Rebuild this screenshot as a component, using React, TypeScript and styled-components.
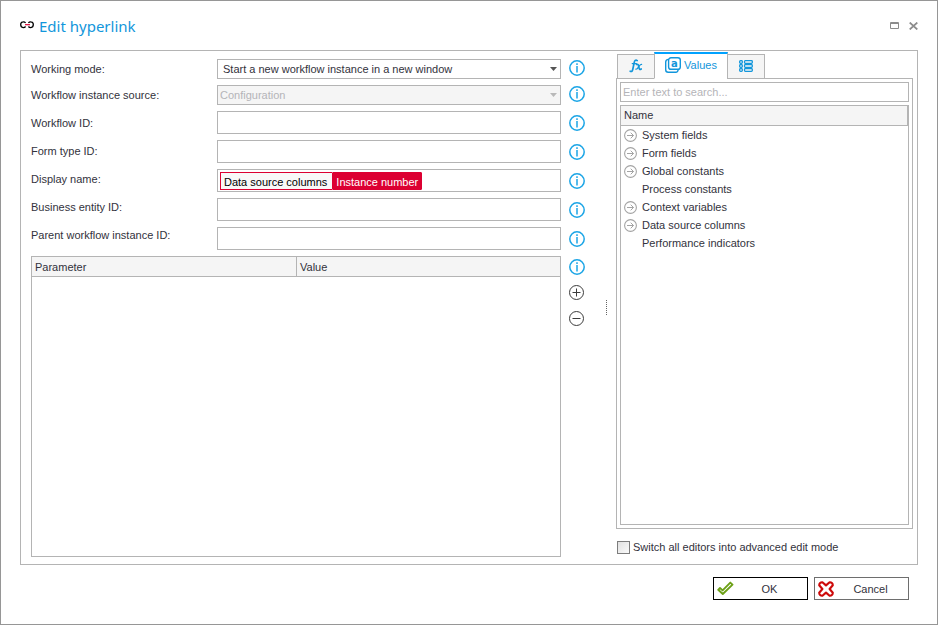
import React, { useState } from 'react';
import styled, { createGlobalStyle, css } from 'styled-components';

const line = '#b4b4b4';
const ink = '#32323c';
const blue = '#1296db';

const GlobalStyle = createGlobalStyle`
  * { box-sizing: border-box; }
  body { margin: 0; background: #fff; }
  body, button, input, select, table {
    font: 11px/16px "Liberation Sans", Tahoma, sans-serif;
    color: ${ink};
  }
`;

const Window = styled.main`
  display: flex;
  flex-direction: column;
  min-height: 100vh;
  padding: 0 19px;
  border: 1px solid #969696;
  background: #fff;
`;

const TitleBar = styled.header`
  display: flex;
  align-items: center;
  height: 49px;
`;

const Title = styled.h1`
  flex: 1;
  margin: 0 0 0 5px;
  font-family: "Noto Sans", "Open Sans", sans-serif;
  font-size: 15px;
  font-weight: 400;
  line-height: 24px;
  color: ${blue};
`;

const IconButton = styled.button`
  display: flex;
  align-items: center;
  justify-content: center;
  padding: 0;
  border: 0;
  background: none;
  cursor: pointer;
  svg { display: block; }
`;

const WindowControls = styled.div`
  display: flex;
  gap: 7px;
  ${IconButton} { width: 12px; height: 12px; justify-content: flex-end; }
`;

const Content = styled.div`
  flex: 1;
  display: grid;
  grid-template-columns: minmax(0, 1fr) 16px 15px 297px;
  column-gap: 8px;
  padding: 0 4px 0 10px;
  border: 1px solid ${line};
`;

const Form = styled.form`
  display: flex;
  flex-direction: column;
  gap: 6px;
  padding: 8px 0 7px;
`;

const Fields = styled.div`
  display: grid;
  grid-template-columns: 186px minmax(0, 1fr);
`;

const Labels = styled.div`
  display: grid;
  grid-template-rows: 23px 26px 29px repeat(4, 28px);
`;

const Label = styled.label`
  align-self: center;
  white-space: nowrap;
  &:first-child { align-self: start; line-height: 20px; }
`;

const Controls = styled.div`
  display: flex;
  flex-direction: column;
  gap: 6px;
`;

const field = css`
  width: 100%;
  border: 1px solid ${line};
  border-radius: 0;
  background: #fff;
  outline: none;
`;

const SelectBox = styled.div`
  display: grid;
  grid-template-columns: minmax(0, 1fr) 11px;
  align-items: center;
  > * { grid-row: 1; }
  svg { grid-column: 2; pointer-events: none; }
`;

const Select = styled.select`
  ${field}
  grid-column: 1 / -1;
  height: 20px;
  padding: 0 16px 0 5px;
  appearance: none;
  &:disabled { padding-left: 2px; background: #f5f5f5; color: #b4b4b8; opacity: 1; }
`;

const TextInput = styled.input`
  ${field}
  height: 23px;
  padding: 0 4px;
`;

const TagField = styled.div`
  ${field}
  display: flex;
  align-items: center;
  height: 23px;
  padding: 0 2px;
`;

const Tag = styled.span<{ $solid?: boolean }>`
  height: 18px;
  padding: ${p => (p.$solid ? '0 3px' : '0 5px 0 3px')};
  border: 1px solid #dc0032;
  border-right-width: ${p => (p.$solid ? 1 : 0)}px;
  border-radius: ${p => (p.$solid ? 1 : 0)}px;
  background: ${p => (p.$solid ? '#dc0032' : '#f8f8f8')};
  color: ${p => (p.$solid ? '#fff' : '#000')};
  line-height: 18px;
  white-space: nowrap;
`;

const ParameterBox = styled.div`
  flex: 1;
  border: 1px solid ${line};
`;

const ParameterTable = styled.table`
  width: 100%;
  table-layout: fixed;
  border-collapse: separate;
  border-spacing: 0;
  th {
    height: 20px;
    padding: 0 3px;
    border-bottom: 1px solid ${line};
    background: #f5f5f5;
    font-weight: 400;
    line-height: 18px;
    text-align: left;
  }
  th + th { border-left: 1px solid ${line}; }
`;

const Actions = styled.div`
  display: grid;
  grid-template-rows: 26px repeat(5, 29px) 28px repeat(3, 26px);
  align-content: start;
  align-items: start;
  padding-top: 9px;
`;

const Splitter = styled.div`
  align-self: center;
  justify-self: end;
  height: 15px;
  margin-right: 1px;
  border-right: 1px dotted #646464;
`;

const Side = styled.aside`
  display: flex;
  flex-direction: column;
  padding: 1px 0 8px;
`;

const Tabs = styled.div`
  display: flex;
  align-items: flex-end;
  height: 27px;
  margin-bottom: -1px;
  padding-left: 1px;
  z-index: 1;
`;

const Tab = styled.button<{ $active?: boolean }>`
  display: flex;
  align-items: center;
  justify-content: center;
  gap: 3px;
  width: ${p => (p.$active ? 74 : 38)}px;
  height: ${p => (p.$active ? 27 : 25)}px;
  padding: 0 0 2px;
  border: 1px solid ${line};
  background: #f5f5f5;
  color: ${blue};
  cursor: pointer;
  & + & { margin-left: -1px; }
  ${p => p.$active && css`
    border-top: 2px solid #00a2ff;
    border-bottom-color: #fff;
    background: #fff;
  `}
`;

const Panel = styled.section`
  flex: 1;
  display: flex;
  flex-direction: column;
  gap: 3px;
  padding: 3px;
  border: 1px solid ${line};
`;

const Search = styled.input`
  ${field}
  height: 20px;
  padding: 0 2px;
  &::placeholder { color: #b4b4b8; opacity: 1; }
`;

const Tree = styled.div`
  flex: 1;
  border: 1px solid ${line};
`;

const TreeHeader = styled.div`
  height: 20px;
  padding: 0 3px;
  border-right: 1px solid ${line};
  border-bottom: 1px solid ${line};
  background: #f5f5f5;
  line-height: 18px;
`;

const TreeList = styled.ul`
  margin: 0;
  padding: 0;
  list-style: none;
`;

const TreeRow = styled.li`
  display: grid;
  grid-template-columns: 13px 1fr;
  column-gap: 5px;
  align-items: center;
  height: 18px;
  padding-left: 3px;
  > span { grid-column: 2; }
`;

const CheckLabel = styled.label`
  display: flex;
  align-items: center;
  gap: 3px;
  padding: 9px 0 0 1px;
  line-height: 18px;
  input {
    width: 13px;
    height: 13px;
    margin: 0;
    appearance: none;
    border: 1px solid #7d7d7d;
    background: linear-gradient(135deg, #e1e1e1, #fafafa);
  }
  input:checked { background: ${blue}; }
`;

const Footer = styled.footer`
  display: flex;
  justify-content: flex-end;
  gap: 6px;
  padding: 12px 9px 24px;
`;

const DialogButton = styled.button<{ $primary?: boolean }>`
  display: grid;
  grid-template-columns: 18px 1fr;
  align-items: center;
  width: 95px;
  height: 23px;
  padding: 0 3px;
  border: 1px solid ${p => (p.$primary ? '#000' : '#6e6e6e')};
  background: #fff;
  text-align: center;
  cursor: pointer;
`;

const LinkIcon = () => (
  <svg width="14" height="10" viewBox="0 0 14 10" fill="none" aria-hidden="true">
    <path d="M5.6 1.9C4.9 1 4 .7 3.2.8 1.6.9.7 2 .7 3.6S1.6 6.5 3.2 6.6c.9 0 1.8-.3 2.4-1.1M8.4 1.9C9.1 1 10 .7 10.8.8c1.6.1 2.5 1.2 2.5 2.8s-.9 2.9-2.5 3c-.9 0-1.8-.3-2.4-1.1" stroke="#000" strokeWidth="1.3" />
    <path d="M5 3.7h5" stroke="#dc0032" strokeWidth="1.2" />
  </svg>
);

const InfoIcon = () => (
  <svg width="16" height="16" viewBox="0 0 16 16" fill="none" stroke="#1ba5e6">
    <circle cx="8" cy="8" r="7.2" strokeWidth="1.5" />
    <path d="M8 6v6.5" strokeWidth="1.5" />
    <path d="M8 3.3v1.6" strokeWidth="1.5" />
  </svg>
);

const CircleIcon = ({ plus }: { plus?: boolean }) => (
  <svg width="16" height="16" viewBox="0 0 16 16" fill="none" stroke="#3c3c3c">
    <circle cx="7.5" cy="7.5" r="7" />
    <path d={plus ? 'M3.5 7.5h8M7.5 3.5v8' : 'M3.5 7.5h8'} />
  </svg>
);

const ArrowDown = ({ muted }: { muted?: boolean }) => (
  <svg width="7" height="4" viewBox="0 0 7 4" aria-hidden="true">
    <path d="M0 0h7L3.5 4z" fill={muted ? '#b9b9b9' : '#555'} />
  </svg>
);

const ExpandIcon = () => (
  <svg width="13" height="13" viewBox="0 0 13 13" fill="none" stroke="#a4a4a4">
    <circle cx="6.5" cy="6.5" r="5.9" strokeWidth="1.1" />
    <path d="M3 6.5h6.5M6.7 3.7l2.8 2.8-2.8 2.8" />
  </svg>
);

const FormulaIcon = () => (
  <svg width="14" height="14" viewBox="0 0 14 14" fill="none" stroke={blue} strokeLinecap="round" aria-hidden="true">
    <path d="M8.2 1.6C6.6.4 5.6 1.6 5.2 3.6L3.8 10.2C3.4 12.2 2.6 13 1.2 12.2" strokeWidth="1.7" />
    <path d="M3.2 4.6h4.2" strokeWidth="1.2" />
    <path d="M7.6 5.4c1.6-.6 1.8.6 2.2 2.6s.8 3 2.4 2" strokeWidth="1.7" />
    <path d="M12.6 5.3c-1.4-.2-2.2 1.2-3 2.6s-1.4 2.6-2.8 2.3" strokeWidth="1.2" />
  </svg>
);

const ValuesIcon = () => (
  <svg width="16" height="16" viewBox="0 0 16 16" fill="none" stroke={blue} strokeWidth="1.4" aria-hidden="true">
    <rect x="3.6" y=".7" width="11.7" height="11.6" rx="2.4" />
    <path d="M3.6 2.4C1.6 2.6.7 3.4.7 5v7.8c0 1.7.9 2.5 2.5 2.5h7.6c1.4 0 2.2-.8 2.4-2.8" />
    <text x="9.4" y="9.6" textAnchor="middle" fontFamily="DejaVu Sans" fontSize="10" fontWeight="700" fill={blue} stroke="none">a</text>
  </svg>
);

const ListIcon = () => (
  <svg width="14" height="12" viewBox="0 0 14 12" fill="none" stroke={blue} strokeWidth="1.3" aria-hidden="true">
    {[0.7, 4.7, 8.7].map(y => (
      <g key={y}>
        <rect x=".7" y={y} width="2.6" height="2.6" rx=".8" />
        <rect x="5.5" y={y} width="7.8" height="2.6" rx=".8" />
      </g>
    ))}
  </svg>
);

const CheckIcon = () => (
  <svg width="17" height="16" viewBox="0 0 17 16" fill="none" stroke="#6ca016" strokeWidth="1.9" strokeLinejoin="round" aria-hidden="true">
    <path d="M1.2 8.8l1.8-1.8 2.6 2.4 7.7-7.8 2.2 2L5.8 13z" />
  </svg>
);

const CrossIcon = () => (
  <svg width="16" height="16" viewBox="0 0 16 16" fill="none" stroke="#cd0a0a" strokeWidth="2.1" strokeLinejoin="round" aria-hidden="true">
    <path d="M4.4 1.2L8 4.4l3.6-3.2c1.8-.2 3.2 1.2 3.2 3L11.6 8l3.2 3.8c0 1.8-1.4 3.2-3.2 3L8 11.6l-3.6 3.2c-1.8.2-3.2-1.2-3.2-3L4.4 8 1.2 4.2c0-1.8 1.4-3.2 3.2-3z" />
  </svg>
);

const labels = [
  { id: 'mode', text: 'Working mode:' },
  { id: 'source', text: 'Workflow instance source:' },
  { id: 'workflow', text: 'Workflow ID:' },
  { id: 'formType', text: 'Form type ID:' },
  { id: 'displayName', text: 'Display name:' },
  { id: 'entity', text: 'Business entity ID:' },
  { id: 'parent', text: 'Parent workflow instance ID:' },
];

const nodes = [
  { name: 'System fields', expandable: true },
  { name: 'Form fields', expandable: true },
  { name: 'Global constants', expandable: true },
  { name: 'Process constants', expandable: false },
  { name: 'Context variables', expandable: true },
  { name: 'Data source columns', expandable: true },
  { name: 'Performance indicators', expandable: false },
];

export default function App() {
  const [advanced, setAdvanced] = useState(false);
  return (
    <>
      <GlobalStyle />
      <Window>
        <TitleBar>
          <LinkIcon />
          <Title>Edit hyperlink</Title>
          <WindowControls>
            <IconButton aria-label="Maximize">
              <svg width="9" height="7" viewBox="0 0 9 7" fill="none" stroke="#8c8c8c">
                <path d="M.5.5h8v6h-8zM0 1.5h9" />
              </svg>
            </IconButton>
            <IconButton aria-label="Close">
              <svg width="9" height="8" viewBox="0 0 9 8" fill="none" stroke="#8c8c8c" strokeWidth="1.7">
                <path d="M.7.5l7.6 7M8.3.5L.7 7.5" />
              </svg>
            </IconButton>
          </WindowControls>
        </TitleBar>

        <Content>
          <Form onSubmit={e => e.preventDefault()}>
            <Fields>
              <Labels>
                {labels.map(l => (
                  <Label key={l.id} id={`${l.id}-label`} htmlFor={l.id}>{l.text}</Label>
                ))}
              </Labels>
              <Controls>
                <SelectBox>
                  <Select id="mode">
                    <option>Start a new workflow instance in a new window</option>
                  </Select>
                  <ArrowDown />
                </SelectBox>
                <SelectBox>
                  <Select id="source" disabled>
                    <option>Configuration</option>
                  </Select>
                  <ArrowDown muted />
                </SelectBox>
                <TextInput id="workflow" />
                <TextInput id="formType" />
                <TagField id="displayName" role="textbox" tabIndex={0} aria-labelledby="displayName-label">
                  <Tag>Data source columns</Tag>
                  <Tag $solid>Instance number</Tag>
                </TagField>
                <TextInput id="entity" />
                <TextInput id="parent" />
              </Controls>
            </Fields>
            <ParameterBox>
              <ParameterTable>
                <thead>
                  <tr>
                    <th scope="col">Parameter</th>
                    <th scope="col">Value</th>
                  </tr>
                </thead>
              </ParameterTable>
            </ParameterBox>
          </Form>

          <Actions>
            {[...labels.map(l => l.text), 'Parameters'].map(name => (
              <IconButton key={name} aria-label={`Information: ${name}`}><InfoIcon /></IconButton>
            ))}
            <IconButton aria-label="Add parameter"><CircleIcon plus /></IconButton>
            <IconButton aria-label="Remove parameter"><CircleIcon /></IconButton>
          </Actions>

          <Splitter role="separator" aria-orientation="vertical" />

          <Side>
            <Tabs role="tablist">
              <Tab role="tab" aria-label="Functions"><FormulaIcon /></Tab>
              <Tab role="tab" aria-selected $active><ValuesIcon />Values</Tab>
              <Tab role="tab" aria-label="List"><ListIcon /></Tab>
            </Tabs>
            <Panel>
              <Search placeholder="Enter text to search..." aria-label="Search" />
              <Tree>
                <TreeHeader>Name</TreeHeader>
                <TreeList>
                  {nodes.map(n => (
                    <TreeRow key={n.name}>
                      {n.expandable && <IconButton aria-label={`Expand ${n.name}`}><ExpandIcon /></IconButton>}
                      <span>{n.name}</span>
                    </TreeRow>
                  ))}
                </TreeList>
              </Tree>
            </Panel>
            <CheckLabel>
              <input type="checkbox" checked={advanced} onChange={e => setAdvanced(e.target.checked)} />
              Switch all editors into advanced edit mode
            </CheckLabel>
          </Side>
        </Content>

        <Footer>
          <DialogButton $primary><CheckIcon />OK</DialogButton>
          <DialogButton><CrossIcon />Cancel</DialogButton>
        </Footer>
      </Window>
    </>
  );
}
